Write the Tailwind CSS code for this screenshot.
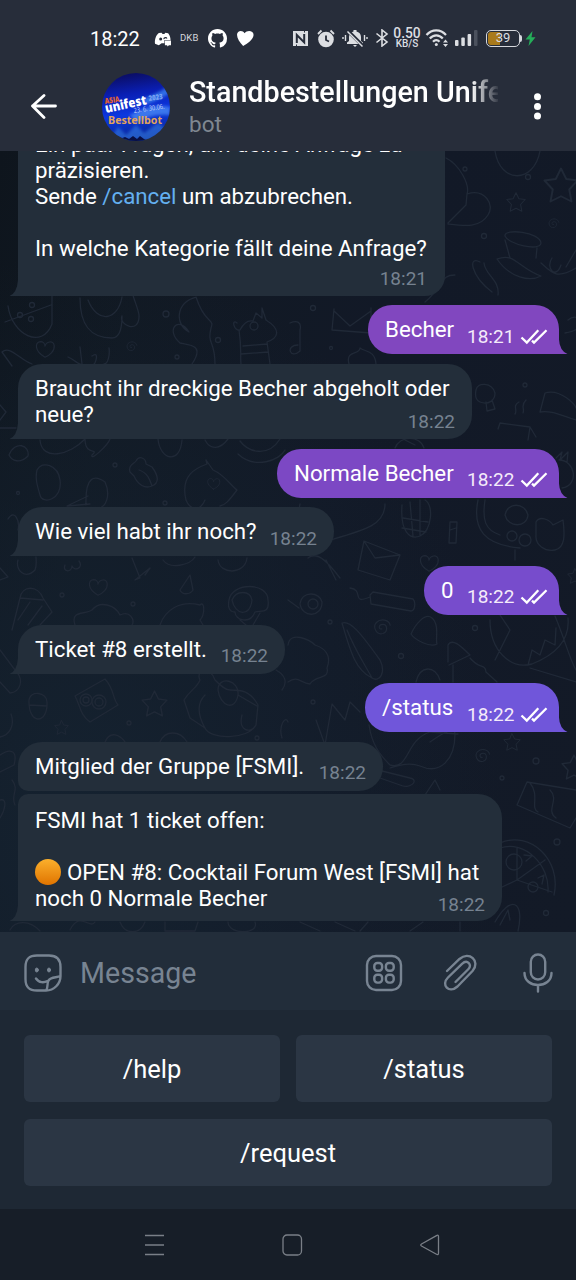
<!DOCTYPE html>
<html lang="de">
<head>
<meta charset="utf-8">
<title>Standbestellungen Unifest</title>
<script src="https://cdn.jsdelivr.net/npm/@tailwindcss/browser@4"></script>
</head>
<body class="w-[576px] h-[1280px] overflow-hidden bg-[#141c26] font-['Roboto',sans-serif] text-white flex flex-col">

<svg class="hidden">
  <symbol id="tailIn" viewBox="0 0 10 16"><path d="M10 0V16H0.5Q8 13 9 0Z"/></symbol>
  <symbol id="tailOut" viewBox="0 0 10 16"><path d="M0 0V16H9.5Q1.5 13 0.8 0Z"/></symbol>
  <symbol id="checks" viewBox="0 0 28 18"><path d="M1.500 9.500L6.800 14.600L18.300 2.200M12 12.600L14 14.600L26.500 2.200" fill="none" stroke="#fff" stroke-width="2.300"/></symbol>
  <symbol id="star" viewBox="-12 -12 24 24" overflow="visible"><path d="M0-11L3.5-4L11-3L5.5 3L7 11L0 7.5L-7 11L-5.5 3L-11-3L-3.5-4Z"/></symbol>
  <symbol id="heart" viewBox="-12 -12 24 24" overflow="visible"><path d="M0 9C-12 2-11-7-5-8C-2-8 0-6 0-3C1-8 9-10 10-4C11 2 5 7 0 9Z"/></symbol>
  <symbol id="swirl" viewBox="-12 -12 24 24" overflow="visible"><path d="M1 1C-3 2-3-4 2-4C7-4 8 4 2 6C-6 8-9-2-5-6C0-11 9-9 10-3"/></symbol>
</svg>

<header class="h-[151px] shrink-0 bg-[#272d3a]">
  <div class="h-[76px] pl-[90px] pr-[40px] flex items-center">
    <span class="text-[20px] leading-6 w-[64px] mt-[2px]">18:22</span>
    <svg class="w-[18px] h-[15px] mt-[3px]" viewBox="0 0 19 16"><path d="M5 1L8 0.7L9 2H11L12 0.7L15 1.3C17 4 17.5 6 17.5 8.5H11V12H8L5 14L1 12.5C0.3 8 2 3.5 5 1Z" fill="#fff"/><circle cx="7" cy="7.4" r="1.6" fill="#272d3a"/><path d="M10.5 7.6A1.6 1.6 0 0 1 13.6 7" stroke="#272d3a" stroke-width="1.4" fill="none"/><path d="M11.5 9H18V14H16L14 15.5V14H11.5Z" fill="#fff"/></svg>
    <span class="ml-[8px] w-[19px] text-[9.5px] tracking-[0.1px] text-[#d5d7dc]">DKB</span>
    <svg class="ml-[9px] w-[19px] h-[19px] mt-[1px]" viewBox="0 0 16 16" fill="#fff"><path d="M8 0C3.58 0 0 3.58 0 8c0 3.54 2.29 6.53 5.47 7.59.4.07.55-.17.55-.38 0-.19-.01-.82-.01-1.49-2.01.37-2.53-.49-2.69-.94-.09-.23-.48-.94-.82-1.13-.28-.15-.68-.52-.01-.53.63-.01 1.08.58 1.23.82.72 1.21 1.87.87 2.33.66.07-.52.28-.87.51-1.07-1.78-.2-3.64-.89-3.64-3.95 0-.87.31-1.59.82-2.15-.08-.2-.36-1.02.08-2.12 0 0 .67-.21 2.2.82.64-.18 1.32-.27 2-.27s1.36.09 2 .27c1.53-1.04 2.2-.82 2.2-.82.44 1.1.16 1.92.08 2.12.51.56.82 1.27.82 2.15 0 3.07-1.87 3.75-3.65 3.95.29.25.54.73.54 1.48 0 1.07-.01 1.93-.01 2.2 0 .21.15.46.55.38A8.01 8.01 0 0 0 16 8c0-4.42-3.58-8-8-8"/></svg>
    <svg class="ml-[9px] w-[19px] h-[17px] mt-px" viewBox="0 0 20 18"><path d="M7.5 17C4 13 1 9 1 5C1 .5 7-.5 9 3.5C12-.5 19 1 18.500 5.500C18 10.500 12 14 7.500 17Z" fill="#fff"/></svg>
    <div class="ml-auto flex items-center text-[#dcdee2]">
      <svg class="w-[17px] h-[17px]" viewBox="0 0 17 17"><path d="M1 1H12V2.500H13V1H16V16H5V14.500H4V16H1Z" fill="currentColor"/><path d="M4.800 13V5L12.200 12.400V4" fill="none" stroke="#272d3a" stroke-width="2"/></svg>
      <svg class="ml-2 w-[18px] h-[19px]" viewBox="0 0 18 19"><circle cx="9" cy="10.500" r="7.800" fill="currentColor"/><path d="M1 5L4.500 1.500M17 5L13.500 1.500" stroke="currentColor" stroke-width="1.800"/><path d="M9 6.500V11L12 12.500" stroke="#272d3a" stroke-width="1.800" fill="none"/></svg>
      <svg class="ml-[7px] w-[26px] h-[19px]" viewBox="0 0 26 19"><path d="M5 15V13.500L7 12V8C7 5 9 3 11.500 2.500V1H14.500V2.500C17 3 19 5 19 8V12L21 13.500V15ZM11 16H15L13 18Z" fill="currentColor"/><path d="M5 1L21.500 17.500" stroke="#272d3a" stroke-width="3.500"/><path d="M5.500 2.500L20.500 17.500" stroke="currentColor" stroke-width="1.500"/><path d="M3.500 6V12M1 8V10M22.500 6V12M25 8V10" stroke="currentColor" stroke-width="1.400"/></svg>
      <svg class="ml-[7px] w-[14px] h-[18px]" viewBox="0 0 14 18"><path d="M1.500 4.500L12 13L7 17V1L12 5L1.500 13.500" fill="none" stroke="currentColor" stroke-width="1.600"/></svg>
      <div class="ml-[4px] w-[28px] mt-[1px] flex flex-col items-center font-medium"><div class="text-[13.800px] leading-[11px]">0.50</div><div class="text-[10px] leading-[10px]">KB/S</div></div>
      <svg class="ml-[4px] w-[24px] h-[20px]" viewBox="0 0 24 20" fill="none" stroke="currentColor" stroke-width="2.200"><path d="M1.500 7C7 .8 15.500 .8 21 7M4.800 10.500C8.500 6.200 14 6.200 17.800 10.500M8 13.800C10 11.500 12.500 11.500 14.500 13.800"/><circle cx="11.300" cy="16.500" r="1.500" fill="currentColor" stroke="none"/><path d="M18 14.500L20.500 11.500L23 14.500ZM18 16L20.500 19L23 16Z" fill="currentColor" stroke="none"/></svg>
      <svg class="ml-[5px] w-[24px] h-[18px]" viewBox="0 0 24 18" fill="currentColor"><rect x="1" y="11" width="3.500" height="6" rx="1"/><rect x="7.300" y="8.500" width="3.500" height="8.500" rx="1"/><rect x="13.600" y="5" width="3.500" height="12" rx="1"/><rect x="20" y="1" width="3.500" height="16" rx="1" fill="#4b515d"/></svg>
      <div class="relative ml-[8px] w-[34px] h-[17px] rounded-[5px] border-[1.5px] border-[#d5d7dc] p-px"><div class="w-[12px] h-full rounded-l-[3px] bg-[#a97a1b]"></div><span class="absolute inset-0 text-center text-[13px] leading-[14px]">39</span></div>
      <div class="w-[2px] h-[7px] bg-[#d5d7dc] rounded-r"></div>
      <svg class="ml-[3px] w-[11px] h-[17px]" viewBox="0 0 11 17"><path d="M7.500 1L0.500 9.500H4.800L3.500 16L10.500 7.200H6.500Z" fill="#25ad59"/></svg>
    </div>
  </div>
  <div class="h-[75px] flex pl-[30px]">
    <svg class="w-[28px] h-[26px] mt-[17px]" viewBox="0 0 28 26" fill="none" stroke="#fff" stroke-width="2.800" stroke-linejoin="round" stroke-linecap="round"><path d="M25.500 13H2.500M14 2.500L2.500 13L14 24.500"/></svg>
    <svg class="ml-[44px] w-[68px] h-[68px] -mt-[3px]" viewBox="0 0 68 68">
      <defs><linearGradient id="av" x1="0.400" y1="0" x2="0.550" y2="1"><stop offset="0" stop-color="#0b0d62"/><stop offset=".3" stop-color="#0a1fb5"/><stop offset=".6" stop-color="#0c38e0"/><stop offset="1" stop-color="#08258c"/></linearGradient><clipPath id="avc"><circle cx="34" cy="34" r="34"/></clipPath><filter id="soft"><feGaussianBlur stdDeviation="1.500"/></filter></defs>
      <g clip-path="url(#avc)"><rect width="68" height="68" fill="url(#av)"/>
      <g filter="url(#soft)"><path d="M40 26Q54 22 68 12V20Q56 28 42 32Z" fill="#3f8cf5" opacity=".7"/><path d="M28 42Q50 30 68 34V42Q50 40 34 50Z" fill="#5ba0f8" opacity=".6"/><path d="M8 66L16 54L24 62L34 52L42 60L56 50L64 56L52 68Z" fill="#3d8cf0" opacity=".5"/></g>
      <path d="M18 68V66L23 64L27 66L31 63L35 66L38 63L42 66L46 68Z" fill="#080f45"/>
      <g font-family="Open Sans,sans-serif" font-weight="800"><text x="3" y="31" font-size="8" fill="#e0612e" textLength="15" lengthAdjust="spacingAndGlyphs" transform="rotate(-8 3 31)">ASIA</text><text x="4" y="40" font-size="13" fill="#fff" textLength="42" lengthAdjust="spacingAndGlyphs" transform="rotate(-12 4 40)">unifest</text><text x="47" y="28" font-size="7.500" fill="#79a2f2" textLength="14" lengthAdjust="spacingAndGlyphs" transform="rotate(-8 47 28)">2023</text><text x="32" y="40" font-size="7" font-weight="400" fill="#c5d5fa" textLength="31" lengthAdjust="spacingAndGlyphs" transform="rotate(-8 32 40)">23. 6. 30.06.</text><text x="6" y="51" font-size="10.500" fill="#e3a45a" font-weight="700" textLength="54" lengthAdjust="spacingAndGlyphs">Bestellbot</text></g></g>
    </svg>
    <div class="ml-[19px] w-[316px]">
      <div class="text-[28.700px] leading-[32px] font-medium whitespace-nowrap overflow-hidden w-[309px] [mask-image:linear-gradient(to_right,black_282px,transparent_311px)]">Standbestellungen Unifest</div>
      <div class="text-[22.500px] leading-[28px] mt-[2px] text-[#7f8791]">bot</div>
    </div>
    <svg class="ml-[24px] mt-[17px] w-[16px] h-[28px]" viewBox="0 0 16 28" fill="#fff"><circle cx="8.500" cy="3.800" r="3.500"/><circle cx="8.500" cy="13.500" r="3.500"/><circle cx="8.500" cy="23" r="3.500"/></svg>
  </div>
</header>

<main class="relative h-[781px] shrink-0 overflow-hidden bg-[linear-gradient(105deg,#0e151d_0%,#111923_22%,#121927_55%,#131a27_100%)]">
  <div class="absolute inset-0 bg-[radial-gradient(ellipse_at_15%_85%,#152230_0%,transparent_60%)]"></div>
  <svg class="absolute inset-0 w-[576px] h-[781px]" viewBox="0 151 576 781" fill="none" stroke="#202937" stroke-width="1.300" stroke-linecap="round" stroke-linejoin="round">
    <!-- upper right -->
    <path d="M495 151C500 184 534 184 540 151M446 158C460 165 470 185 467 194C485 188 495 205 488 215C480 228 465 226 448 224M467 194L466 205L448 223M505 236C504 228 540 232 541 243C540 252 508 244 505 236ZM497 259C515 252 518 268 541 276C530 282 510 278 497 259M541 263C551 272 556 280 576 268M552 258C545 268 556 280 561 265M566 267L576 250M505 240L510 258M537 248L536 258M480 262C468 255 470 275 492 292M484 263C485 275 500 280 498 295M565 333C590 330 580 310 568 320M425 302C445 285 440 275 455 275"/>
    <use href="#star" x="543" y="167" width="36" height="36"/><use href="#star" x="506" y="192" width="20" height="20"/><use href="#swirl" x="546" y="217" width="14" height="14"/>
    <!-- row below the first reply -->
    <path d="M8 306C12 335 42 350 52 324V295M5 322L51 305M80 298C80 325 90 338 112 338C120 338 122 328 122 316M88 300C98 325 118 320 122 297M122 316C118 325 140 335 139 315C138 308 134 300 133 295M196 297C175 303 175 325 189 332C178 315 165 330 180 343C190 345 205 345 192 364M196 297C205 325 215 318 211 328C207 345 215 340 215 364M2 352C10 345 20 360 32 364M2 352L12 366M68 357C75 360 80 366 82 364M80 347L82 364M92 356C100 350 95 365 94 364M109 348C110 355 108 364 104 364M239 330C242 350 240 356 241 364M237 323C231 318 234 332 240 330C244 322 248 320 253 321L256 313L262 318L262 308L266 320C282 330 278 338 267 342L270 364M243 346L267 344M241 354L268 352M334 309L332 330L371 333V308M334 311L350 326L371 311M290 323C297 320 302 322 300 330V351C290 360 285 345 298 345M349 364C345 350 360 355 360 348C365 352 375 350 376 364"/>
    <use href="#heart" x="34" y="338" width="22" height="22"/><use href="#swirl" x="124" y="340" width="14" height="14"/><circle cx="254" cy="326" r="4"/><circle cx="32" cy="305" r="2.500"/><circle cx="20" cy="315" r="2.500"/><circle cx="31" cy="319" r="2.500"/>
    <!-- row around the second answer -->
    <path d="M0 405L6 412L0 420M0 428H16M40 440C42 462 70 455 85 439M85 439C85 457 100 447 92 455C90 462 108 445 110 439M158 439C160 460 180 465 182 440M205 440C210 450 220 450 228 439M240 441C248 452 268 458 280 439M238 454C255 470 280 460 285 450M9 455C15 440 30 445 28 456C20 464 12 461 9 455ZM37 470C42 460 58 465 60 480C63 500 42 505 40 495C37 485 35 478 37 470ZM130 472C128 465 134 464 136 461C139 455 146 458 146 464L152 467C158 475 160 483 152 486C145 489 138 485 134 476ZM139 470C148 473 150 480 152 486M186 500C180 475 196 468 207 464L206 460L213 470C225 475 230 485 237 490C228 502 225 505 220 506M186 500C190 510 200 512 205 500M86 505C85 475 95 475 105 482C111 495 106 508 98 508M88 496L67 506L90 504M8 519C15 508 20 522 18 530"/>
    <path d="M476 390C477 382 492 382 495 393C495 401 488 405 480 402C475 400 475 395 476 390ZM486 402L487 411L495 409L492 400M540 412L545 393C560 388 576 405 576 408M540 412C550 410 560 415 576 420M498 429L500 423L530 427L528 440M530 427L536 437M515 414C518 410 512 406 519 402M523 413C525 408 520 406 526 400M395 448C400 435 420 435 424 448M405 440L415 445M559 460C575 460 580 485 562 488M556 458L562 452L560 460L568 452L567 462M300 504C296 520 310 535 330 540C365 530 385 525 385 504M402 505C400 532 410 540 420 536C432 530 434 505 425 500M403 518L428 522M402 528L426 532M410 502L413 536M420 500L420 535M450 522H457L456 543H449ZM450 530L456 528M478 500C472 530 485 545 520 548M485 500C482 520 485 530 500 535M505 515C507 502 525 502 528 515C527 528 508 528 505 515ZM536 522C540 515 550 520 553 525L563 520C565 535 565 548 555 550C545 552 535 545 536 535ZM515 550V560M360 560L364 541L400 555L390 580L358 570ZM364 541L375 558L400 555M308 558C318 550 330 565 340 578M326 560L336 580"/>
    <use href="#heart" x="418" y="552" width="22" height="22"/><use href="#heart" x="206" y="476" width="15" height="15"/><circle cx="525" cy="540" r="6"/><circle cx="512" cy="536" r="5"/>
    <!-- rows around the ticket message -->
    <path d="M18 560C15 570 25 580 35 570C37 565 36 560 36 557M65 565C62 572 72 573 72 566C74 572 84 568 79 561M132 558L140 578L135 580L150 568L145 575M163 560C170 570 190 565 195 557M218 560C220 575 245 575 247 558M180 590L190 575L193 590C190 595 182 595 180 590ZM0 568L8 577L0 580M12 630L20 598C22 585 38 585 43 598L52 612L40 625M20 598L43 600M28 625L42 606M18 620L30 602M75 625C70 610 85 615 92 610C100 600 115 605 120 615C130 610 135 620 132 625M160 625C165 610 180 600 200 605C205 600 205 615 200 620L203 625M229 600C232 582 268 582 268 600C270 615 260 610 255 612C250 625 235 620 235 612C228 612 228 605 229 600ZM232 600C235 615 250 618 252 600C250 590 236 590 232 600M240 620L246 625M260 613L253 625M0 650L15 670C25 680 20 692 10 693L0 682M276 670C285 675 288 682 282 690M75 696L105 679C115 690 112 698 118 705L90 722C80 715 80 705 75 696ZM29 700C30 690 47 692 47 702C48 725 28 725 29 700ZM29 705L47 706M184 700C190 690 197 688 200 680C195 670 210 665 215 680C220 685 225 690 230 690C240 690 250 690 258 705L256 725C248 740 210 740 205 728L190 718ZM205 728C195 710 200 700 205 695M218 690C218 675 240 680 238 695C235 712 220 706 218 690ZM238 695L257 706M242 715C238 730 250 735 256 725M0 737C10 735 15 725 11 714M282 738C278 725 286 715 288 722M105 742C110 730 120 735 125 742M160 742C165 730 180 730 187 742"/>
    <circle cx="86" cy="700" r="6"/><circle cx="99" cy="702" r="7"/><circle cx="86" cy="700" r="3"/><circle cx="99" cy="702" r="4"/><use href="#heart" x="85" y="576" width="26" height="22"/>
    <use href="#star" x="141" y="690" width="27" height="27"/><use href="#star" x="54" y="720" width="15" height="15"/>
    <!-- middle right -->
    <path d="M288 600L299 608M300 604C302 590 320 592 322 602C322 618 302 618 300 604ZM370 595L373 592L413 599C416 602 415 611 411 611L371 604ZM370 597C350 605 365 590 350 588M342 623C350 620 360 632 380 660C386 672 380 683 372 678C355 670 350 650 342 623ZM347 630C355 650 365 665 372 678M288 645C290 630 310 640 315 645C330 650 330 660 327 668C330 680 315 675 310 684C300 683 298 675 288 682M411 634C415 625 425 612 432 618C440 625 435 640 437 644C430 648 415 640 411 634ZM448 662V645C452 638 460 645 470 655L449 665M453 665V682M470 658C480 670 485 663 486 672L497 682M490 620C490 650 510 670 532 664C555 655 570 640 568 618M500 615L510 630L495 660M528 665L532 650L540 655L545 640L555 645L556 628M555 616C565 640 570 660 576 670M530 668L576 682M416 682C420 665 435 665 440 680M316 720L325 745M325 745L332 704L345 720L350 702L360 712M369 725C372 745 380 755 390 765C410 770 405 740 430 732L458 734M430 742C440 735 455 725 455 734C455 760 440 775 420 766C410 762 400 765 390 768M378 770L410 778C420 780 410 790 400 785L380 778M425 795L435 780L440 790M0 755C10 748 18 750 14 765L0 772M12 780C20 790 10 795 15 805M0 800C8 798 5 810 0 818M517 805L527 782L576 790M517 805L570 828L576 818M530 783C540 795 530 808 538 812M550 790C560 800 545 810 556 818M500 843C530 830 562 860 554 895M500 848C525 840 550 865 548 892M517 848V880L552 892M517 880L500 888M517 880L545 860M524 855L532 856L526 861M538 878L544 875L542 884M10 930C15 920 30 920 40 931M70 930C80 910 90 930 95 922M120 922C125 935 140 935 145 922M165 922V931H195L198 922M228 922C228 935 260 935 255 922M300 922L320 931M335 922L355 931M360 931L368 922M410 931L423 922M460 922V931M495 922C510 895 525 900 518 931M500 925L508 910L510 920"/>
    <circle cx="514" cy="862" r="8"/><circle cx="533" cy="887" r="5"/><circle cx="313" cy="604" r="5"/>
    <use href="#swirl" x="370" y="617" width="22" height="22"/><use href="#swirl" x="472" y="747" width="19" height="19"/><use href="#star" x="503" y="733" width="18" height="18"/><use href="#star" x="561" y="754" width="26" height="26"/><use href="#star" x="567" y="568" width="16" height="16"/>
    <g><circle cx="166" cy="314" r="3"/><circle cx="218" cy="340" r="2.500"/><circle cx="177" cy="357" r="2"/><circle cx="313" cy="308" r="2.500"/><circle cx="484" cy="236" r="2.500"/><circle cx="465" cy="169" r="2"/><circle cx="528" cy="177" r="2.500"/><circle cx="331" cy="348" r="1.500"/><circle cx="525" cy="385" r="2"/><circle cx="115" cy="465" r="2"/><circle cx="18" cy="493" r="1.500"/><circle cx="165" cy="503" r="2"/><circle cx="62" cy="595" r="2"/><circle cx="133" cy="604" r="2"/><circle cx="330" cy="622" r="2"/><circle cx="401" cy="656" r="2.500"/><circle cx="475" cy="628" r="2.500"/><circle cx="313" cy="702" r="2"/><circle cx="129" cy="723" r="2"/><circle cx="257" cy="738" r="2"/><circle cx="536" cy="761" r="3"/><circle cx="502" cy="778" r="2"/><circle cx="557" cy="842" r="3"/><circle cx="546" cy="913" r="2.500"/></g>
  </svg>

  <div class="relative h-[770px] pl-[18px] pr-[17px] flex flex-col justify-end gap-[9.700px] text-[22.300px] leading-[26px]">
    <div class="relative self-start w-[427px] h-[174px] shrink-0 rounded-[20px] rounded-bl-none bg-[#232e3a] pl-[17px] pt-[9px] whitespace-nowrap">
      <p>Ein paar Fragen, um deine Anfrage zu</p><p>präzisieren.</p><p>Sende <span class="text-[#64b0f0]">/cancel</span> um abzubrechen.</p><p class="mt-[26px]">In welche Kategorie fällt deine Anfrage?</p>
      <span class="absolute right-[18px] bottom-[5px] text-[19px] leading-[24px] text-[#768290]">18:21</span>
      <svg class="absolute -left-[9px] bottom-0 w-[10px] h-[16px] fill-[#232e3a]"><use href="#tailIn"/></svg>
    </div>
    <div class="relative self-end w-[191px] h-[49px] shrink-0 rounded-[24px] rounded-br-none bg-[#8147bf] pl-[17px] pr-[11px] pt-[11px] flex justify-between whitespace-nowrap">
      <span>Becher</span><span class="flex gap-[6px] text-[19px] leading-[24px] pt-[8.500px] text-[#f4ebfa]"><span class="w-[47px]">18:21</span><svg class="w-[28px] h-[18px] mt-[3px]"><use href="#checks"/></svg></span>
      <svg class="absolute -right-[9px] bottom-0 w-[10px] h-[16px] fill-[#8147bf]"><use href="#tailOut"/></svg>
    </div>
    <div class="relative self-start w-[454px] h-[75px] shrink-0 rounded-[24px] rounded-bl-none bg-[#232e3a] pl-[17px] pt-[11px] whitespace-nowrap">
      <p>Braucht ihr dreckige Becher abgeholt oder</p><p>neue?</p>
      <span class="absolute right-[17px] bottom-[5px] text-[19px] leading-[24px] text-[#768290]">18:22</span>
      <svg class="absolute -left-[9px] bottom-0 w-[10px] h-[16px] fill-[#232e3a]"><use href="#tailIn"/></svg>
    </div>
    <div class="relative self-end w-[282px] h-[49px] shrink-0 rounded-[24px] rounded-br-none bg-[#7c48c4] pl-[17px] pr-[11px] pt-[11px] flex justify-between whitespace-nowrap">
      <span>Normale Becher</span><span class="flex gap-[6px] text-[19px] leading-[24px] pt-[8.500px] text-[#f4ebfa]"><span class="w-[47px]">18:22</span><svg class="w-[28px] h-[18px] mt-[3px]"><use href="#checks"/></svg></span>
      <svg class="absolute -right-[9px] bottom-0 w-[10px] h-[16px] fill-[#7c48c4]"><use href="#tailOut"/></svg>
    </div>
    <div class="relative self-start w-[316px] h-[49px] shrink-0 rounded-[24px] rounded-bl-none bg-[#232e3a] pl-[17px] pr-[17px] pt-[11px] flex justify-between whitespace-nowrap">
      <span>Wie viel habt ihr noch?</span><span class="pt-[8.500px] text-[19px] leading-[24px] text-[#768290]">18:22</span>
      <svg class="absolute -left-[9px] bottom-0 w-[10px] h-[16px] fill-[#232e3a]"><use href="#tailIn"/></svg>
    </div>
    <div class="relative self-end w-[135px] h-[49px] shrink-0 rounded-[24px] rounded-br-none bg-[#774ccc] pl-[17px] pr-[11px] pt-[11px] flex justify-between whitespace-nowrap">
      <span>0</span><span class="flex gap-[6px] text-[19px] leading-[24px] pt-[8.500px] text-[#f4ebfa]"><span class="w-[47px]">18:22</span><svg class="w-[28px] h-[18px] mt-[3px]"><use href="#checks"/></svg></span>
      <svg class="absolute -right-[9px] bottom-0 w-[10px] h-[16px] fill-[#774ccc]"><use href="#tailOut"/></svg>
    </div>
    <div class="relative self-start w-[267px] h-[49px] shrink-0 rounded-[24px] rounded-bl-none bg-[#232e3a] pl-[17px] pr-[17px] pt-[11px] flex justify-between whitespace-nowrap">
      <span>Ticket #8 erstellt.</span><span class="pt-[8.500px] text-[19px] leading-[24px] text-[#768290]">18:22</span>
      <svg class="absolute -left-[9px] bottom-0 w-[10px] h-[16px] fill-[#232e3a]"><use href="#tailIn"/></svg>
    </div>
    <div class="relative self-end w-[194px] h-[49px] shrink-0 rounded-[24px] rounded-br-none bg-[#7056da] pl-[17px] pr-[11px] pt-[11px] flex justify-between whitespace-nowrap">
      <span>/status</span><span class="flex gap-[6px] text-[19px] leading-[24px] pt-[9px] text-[#f4ebfa]"><span class="w-[47px]">18:22</span><svg class="w-[28px] h-[18px] mt-[3px]"><use href="#checks"/></svg></span>
      <svg class="absolute -right-[9px] bottom-0 w-[10px] h-[16px] fill-[#7056da]"><use href="#tailOut"/></svg>
    </div>
    <div class="flex flex-col gap-[3px] shrink-0">
      <div class="relative self-start w-[365px] h-[49px] rounded-[24px] rounded-bl-[10px] bg-[#232e3a] pl-[17px] pr-[17px] pt-[11px] flex justify-between whitespace-nowrap">
        <span>Mitglied der Gruppe [FSMI].</span><span class="pt-[8px] text-[19px] leading-[24px] text-[#768290]">18:22</span>
      </div>
      <div class="relative self-start w-[484px] h-[127px] rounded-[24px] rounded-tl-[10px] rounded-bl-none bg-[#232e3a] pl-[17px] pt-[13px] whitespace-nowrap">
        <p>FSMI hat 1 ticket offen:</p>
        <p class="mt-[26px] flex"><svg class="w-[26px] h-[26px] mr-[6px]" viewBox="0 0 26 26"><defs><linearGradient id="orb" x2="0" y2="1"><stop offset="0" stop-color="#fbb02c"/><stop offset="1" stop-color="#e07400"/></linearGradient></defs><circle cx="13" cy="13" r="13" fill="url(#orb)"/></svg>OPEN #8: Cocktail Forum West [FSMI] hat</p>
        <p>noch 0 Normale Becher</p>
        <span class="absolute right-[17px] bottom-[4px] text-[19px] leading-[24px] text-[#768290]">18:22</span>
        <svg class="absolute -left-[9px] bottom-0 w-[10px] h-[16px] fill-[#232e3a]"><use href="#tailIn"/></svg>
      </div>
    </div>
  </div>
</main>

<section class="h-[78px] shrink-0 bg-[#222d3a] flex items-center pl-[24px] pr-[23px] text-[#788492]">
  <svg class="w-[38px] h-[38px] mt-[3px]" viewBox="0 0 38 38" fill="none" stroke="currentColor" stroke-width="2.400" stroke-linecap="round"><path d="M22 36.500H13C5 36.500 1.500 33 1.500 25V13C1.500 5 5 1.500 13 1.500H25C33 1.500 36.500 5 36.500 13V22C36.500 30 30 36.500 22 36.500ZM22 36.500C24.500 34 22.500 30 24.500 26.500C27 22.500 33 24 36.500 22M12 24.500C15 29 20 29 23.500 27"/><ellipse cx="12.800" cy="16" rx="1.500" ry="2" fill="currentColor" stroke-width="1"/><ellipse cx="25" cy="16" rx="1.500" ry="2" fill="currentColor" stroke-width="1"/></svg>
  <span class="ml-[18px] text-[28.600px] leading-8 mt-[4px]">Message</span>
  <div class="ml-auto flex items-center mt-[3px]">
    <svg class="w-[38px] h-[38px]" viewBox="0 0 38 38" fill="none" stroke="currentColor" stroke-width="2.400"><rect x="2" y="2" width="34" height="34" rx="9"/><rect x="9.300" y="9" width="7.800" height="7.800" rx="3"/><rect x="20.900" y="9" width="7.800" height="7.800" rx="3"/><rect x="9.300" y="20.800" width="7.800" height="7.800" rx="3"/><rect x="20.900" y="20.800" width="7.800" height="7.800" rx="3"/></svg>
    <svg class="ml-[40px] w-[36px] h-[38px]" viewBox="0 0 36 38" fill="none" stroke="currentColor" stroke-width="2.400" stroke-linecap="round"><path d="M4 17L16.500 5C26-3.500 38 7 29.500 17L14.500 32.500C6 40-2.500 31 5 23.500L19 9.800C24.500 5 29.500 11 25.500 15L12.500 28"/></svg>
    <svg class="ml-[42px] w-[32px] h-[42px]" viewBox="0 0 32 42" fill="none" stroke="currentColor" stroke-width="2.400" stroke-linecap="round"><rect x="9.800" y="2.500" width="14.400" height="25" rx="7.200"/><path d="M3.500 21C3.500 37 30.500 37 30.500 21M17 33.500V39.500"/></svg>
  </div>
</section>

<section class="h-[199px] shrink-0 bg-[#1e2834] px-6 pt-[25px] grid grid-cols-2 auto-rows-[67px] gap-x-4 gap-y-[17px] text-[25.500px]">
  <div class="rounded-[6px] bg-[#2b3644] flex items-center justify-center pt-px">/help</div>
  <div class="rounded-[6px] bg-[#2b3644] flex items-center justify-center pt-px">/status</div>
  <div class="col-span-2 rounded-[6px] bg-[#2b3644] flex items-center justify-center pt-px">/request</div>
</section>

<nav class="h-[71px] shrink-0 bg-[#171e28] flex items-center pl-[144px]">
  <svg class="w-[21px] h-[24px]" viewBox="0 0 21 24" stroke="#7a7f87" stroke-width="1.300"><path d="M1 2.500H20M1 12H20M1 21.500H20"/></svg>
  <svg class="ml-[117px] w-[21px] h-[22px]" viewBox="0 0 21 22" fill="none" stroke="#7a7f87" stroke-width="1.300"><rect x="1" y="1" width="18.500" height="20" rx="4"/></svg>
  <svg class="ml-[116px] w-[21px] h-[22px]" viewBox="0 0 21 22" fill="none" stroke="#7a7f87" stroke-width="1.300" stroke-linejoin="round"><path d="M17.500 1.600C19 .8 19.500 1.300 19.500 2.500V19C19.500 20.500 19 21 17.500 20.200L2.500 12Q1 11 2.500 10Z"/></svg>
</nav>
</body>
</html>
